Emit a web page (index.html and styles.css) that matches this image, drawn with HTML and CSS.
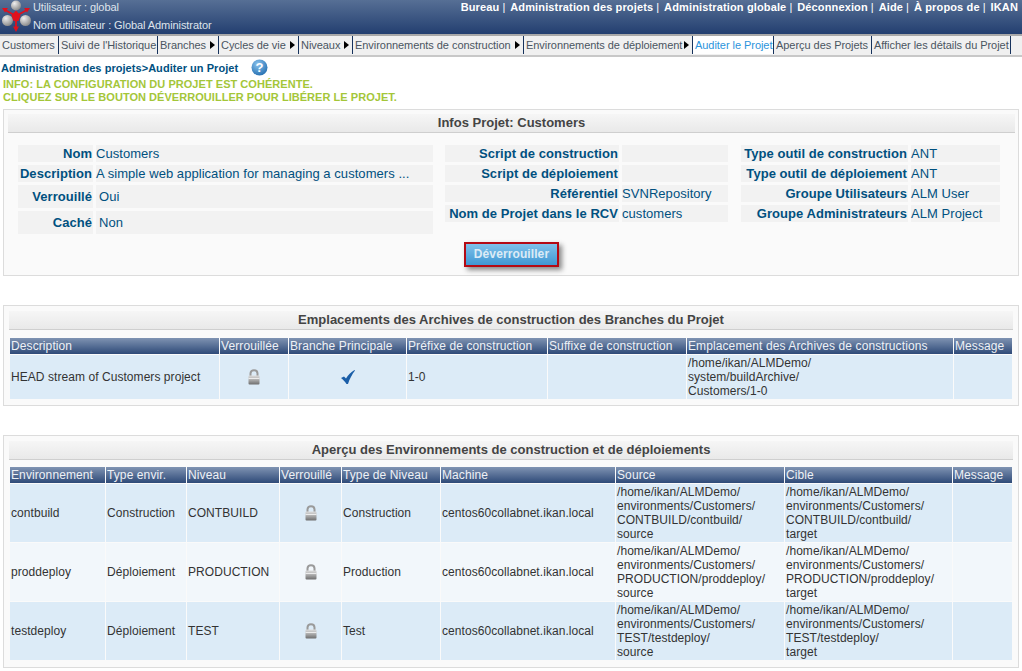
FILE: index.html
```html
<!DOCTYPE html>
<html lang="fr">
<head>
    <meta charset="UTF-8">
    <title>Auditer un Projet</title>
    <link rel="stylesheet" href="styles.css">
</head>
<body>
    <svg width="0" height="0" class="defs">
        <defs>
            <linearGradient id="lock-body" x1="0" y1="0" x2="0" y2="1">
                <stop offset="0" stop-color="#dcdcdc"/>
                <stop offset="0.45" stop-color="#b0b0b0"/>
                <stop offset="1" stop-color="#6e6e6e"/>
            </linearGradient>
            <symbol id="lock" viewBox="0 0 14 16">
                <path d="M3.500 7.500V4.500C3.500 2.500 5 1.200 7 1.200S10.500 2.500 10.500 4.500V7.500" fill="none" stroke="#9a9a9a" stroke-width="2"/>
                <rect x="1.500" y="6.500" width="11" height="9" rx="1" fill="url(#lock-body)"/>
                <rect x="1.500" y="9" width="11" height="1" fill="#ececec"/>
            </symbol>
            <radialGradient id="ball" cx="0.35" cy="0.3" r="0.8">
                <stop offset="0" stop-color="#eeeeee"/>
                <stop offset="1" stop-color="#808080"/>
            </radialGradient>
        </defs>
    </svg>

    <div class="header">
        <div class="user-box">
            <svg class="logo" width="30" height="33" viewBox="0 0 30 33">
                <circle cx="15" cy="5.500" r="5" fill="url(#ball)"/>
                <circle cx="6.500" cy="20.500" r="5.500" fill="url(#ball)"/>
                <circle cx="24.500" cy="20.500" r="5.500" fill="url(#ball)"/>
                <path d="M15 16L5 10.500M15 16L25 10.500M15 16V27" stroke="#e0101c" stroke-width="1.800"/>
                <path d="M15 10.500L19.500 15.500L17.500 21H12.500L10.500 15.500Z" fill="#e0101c"/>
                <path d="M1 8L7 8L4 12.500ZM29 8L23 8L26 12.500ZM15 32L12 26.500H18Z" fill="#e0101c"/>
            </svg>
            <div class="user-text">
                <div>Utilisateur : global</div>
                <div>Nom utilisateur : Global Administrator</div>
            </div>
        </div>
        <div class="top-links">
            <a>Bureau</a><span>|</span>
            <a>Administration des projets</a><span>|</span>
            <a>Administration globale</a><span>|</span>
            <a>Déconnexion</a><span>|</span>
            <a>Aide</a><span>|</span>
            <a>À propos de</a><span>|</span>
            <a>IKAN</a>
        </div>
    </div>

    <div class="nav">
        <a class="w-customers">Customers</a>
        <a class="w-suivi">Suivi de l'Historique</a>
        <a class="w-branches arrow">Branches</a>
        <a class="w-cycles arrow">Cycles de vie</a>
        <a class="w-niveaux arrow">Niveaux</a>
        <a class="w-envc arrow">Environnements de construction</a>
        <a class="w-envd arrow">Environnements de déploiement</a>
        <a class="w-audit active">Auditer le Projet</a>
        <a class="w-apercu">Aperçu des Projets</a>
        <a class="w-details">Afficher les détails du Projet</a>
    </div>

    <div class="crumb">
        <span>Administration des projets&gt;Auditer un Projet</span>
        <svg width="17" height="17" viewBox="0 0 17 17">
            <defs>
                <radialGradient id="help" cx="0.4" cy="0.3" r="0.8">
                    <stop offset="0" stop-color="#8cc4ee"/>
                    <stop offset="1" stop-color="#1c68ac"/>
                </radialGradient>
            </defs>
            <circle cx="8.500" cy="8.500" r="8" fill="url(#help)"/>
            <text x="8.500" y="13" class="help-mark">?</text>
        </svg>
    </div>
    <div class="info">
        INFO: LA CONFIGURATION DU PROJET EST COHÉRENTE.<br>
        CLIQUEZ SUR LE BOUTON DÉVERROUILLER POUR LIBÉRER LE PROJET.
    </div>

    <div class="panel panel-info">
        <h2 class="panel-title">Infos Projet: Customers</h2>
        <div class="fields">
            <div class="field-col col-a">
                <div class="field"><b>Nom</b><span>Customers</span></div>
                <div class="field"><b>Description</b><span>A simple web application for managing a customers ...</span></div>
                <div class="field tall"><b>Verrouillé</b><span>Oui</span></div>
                <div class="field tall"><b>Caché</b><span>Non</span></div>
            </div>
            <div class="field-col col-b">
                <div class="field"><b>Script de construction</b><span></span></div>
                <div class="field"><b>Script de déploiement</b><span></span></div>
                <div class="field"><b>Référentiel</b><span>SVNRepository</span></div>
                <div class="field"><b>Nom de Projet dans le RCV</b><span>customers</span></div>
            </div>
            <div class="field-col col-c">
                <div class="field"><b>Type outil de construction</b><span>ANT</span></div>
                <div class="field"><b>Type outil de déploiement</b><span>ANT</span></div>
                <div class="field"><b>Groupe Utilisateurs</b><span>ALM User</span></div>
                <div class="field"><b>Groupe Administrateurs</b><span>ALM Project</span></div>
            </div>
        </div>
        <div class="actions"><button class="btn">Déverrouiller</button></div>
    </div>

    <div class="panel panel-branches">
        <h2 class="panel-title">Emplacements des Archives de construction des Branches du Projet</h2>
        <table class="grid">
            <colgroup>
                <col class="b1"><col class="b2"><col class="b3"><col class="b4"><col class="b5"><col class="b6"><col class="b7">
            </colgroup>
            <tr>
                <th>Description</th><th>Verrouillée</th><th>Branche Principale</th><th>Préfixe de construction</th><th>Suffixe de construction</th><th>Emplacement des Archives de constructions</th><th>Message</th>
            </tr>
            <tr>
                <td>HEAD stream of Customers project</td>
                <td class="icon"><svg class="lock"><use href="#lock"/></svg></td>
                <td class="icon">
                    <svg width="16" height="16" viewBox="0 0 16 16"><path d="M1 9L4 7.500L6 9.500C8 6 11 3 14.500 1L15 1.500C12 5.500 9.500 10 8 15H6.500C5 12.500 3 10.500 1 9Z" fill="#1a5ea8"/></svg>
                </td>
                <td>1-0</td>
                <td></td>
                <td>/home/ikan/ALMDemo/<br>system/buildArchive/<br>Customers/1-0</td>
                <td></td>
            </tr>
        </table>
    </div>

    <div class="panel panel-envs">
        <h2 class="panel-title">Aperçu des Environnements de construction et de déploiements</h2>
        <table class="grid">
            <colgroup>
                <col class="e1"><col class="e2"><col class="e3"><col class="e4"><col class="e5"><col class="e6"><col class="e7"><col class="e8"><col class="e9">
            </colgroup>
            <tr>
                <th>Environnement</th><th>Type envir.</th><th>Niveau</th><th>Verrouillé</th><th>Type de Niveau</th><th>Machine</th><th>Source</th><th>Cible</th><th>Message</th>
            </tr>
            <tr>
                <td>contbuild</td><td>Construction</td><td>CONTBUILD</td>
                <td class="icon"><svg class="lock"><use href="#lock"/></svg></td>
                <td>Construction</td><td>centos60collabnet.ikan.local</td>
                <td>/home/ikan/ALMDemo/<br>environments/Customers/<br>CONTBUILD/contbuild/<br>source</td>
                <td>/home/ikan/ALMDemo/<br>environments/Customers/<br>CONTBUILD/contbuild/<br>target</td>
                <td></td>
            </tr>
            <tr class="alt">
                <td>proddeploy</td><td>Déploiement</td><td>PRODUCTION</td>
                <td class="icon"><svg class="lock"><use href="#lock"/></svg></td>
                <td>Production</td><td>centos60collabnet.ikan.local</td>
                <td>/home/ikan/ALMDemo/<br>environments/Customers/<br>PRODUCTION/proddeploy/<br>source</td>
                <td>/home/ikan/ALMDemo/<br>environments/Customers/<br>PRODUCTION/proddeploy/<br>target</td>
                <td></td>
            </tr>
            <tr>
                <td>testdeploy</td><td>Déploiement</td><td>TEST</td>
                <td class="icon"><svg class="lock"><use href="#lock"/></svg></td>
                <td>Test</td><td>centos60collabnet.ikan.local</td>
                <td>/home/ikan/ALMDemo/<br>environments/Customers/<br>TEST/testdeploy/<br>source</td>
                <td>/home/ikan/ALMDemo/<br>environments/Customers/<br>TEST/testdeploy/<br>target</td>
                <td></td>
            </tr>
        </table>
    </div>
</body>
</html>
```

FILE: styles.css
```css
html, body {
    margin: 0;
    padding: 0;
    overflow: hidden;
}
body {
    font-family: "Liberation Sans", Arial, sans-serif;
    font-size: 12px;
    color: #333;
    background: #fff;
}
.defs {
    display: block;
    height: 0;
}

/* header */
.header {
    display: flex;
    justify-content: space-between;
    height: 34px;
    background: linear-gradient(#566f95, #233f70);
    border-bottom: 2px solid #a9a9a9;
    color: #fff;
    box-sizing: content-box;
}
.user-box {
    display: flex;
}
.logo {
    margin-left: 1px;
    flex: none;
}
.user-text {
    margin: -2px 0 0 2px;
    font-size: 11px;
    letter-spacing: -0.08px;
    line-height: 18px;
    color: #dfe4ec;
}
.top-links {
    display: flex;
    padding-right: 4px;
    font-size: 11px;
    line-height: 15px;
}
.top-links a {
    font-weight: bold;
    letter-spacing: 0.14px;
}
.top-links span {
    margin: 0 5px 0 3px;
}

/* nav */
.nav {
    display: flex;
    height: 19px;
    background: #f0f0f0;
    border-bottom: 2px solid #c8c8c8;
    font-size: 11px;
    line-height: 19px;
    letter-spacing: -0.05px;
    color: #4a5561;
}
.nav a {
    box-sizing: border-box;
    height: 18px;
    padding-left: 2px;
    border-right: 1px solid #16325c;
    white-space: nowrap;
    position: relative;
}
.nav a.active {
    background: #fff;
    color: #2b94dc;
}
.nav a.arrow::after {
    content: "";
    position: absolute;
    right: 3px;
    top: 5px;
    border-left: 5px solid #000;
    border-top: 4px solid transparent;
    border-bottom: 4px solid transparent;
}
.w-customers { width: 59px; }
.w-suivi { width: 99px; }
.w-branches { width: 61px; }
.w-cycles { width: 80px; }
.w-niveaux { width: 54px; }
.w-envc { width: 171px; }
.w-envd { width: 169px; }
.w-audit { width: 81px; }
.w-apercu { width: 98px; }
.w-details { width: 139px; }

/* title and message */
.crumb {
    display: flex;
    align-items: center;
    height: 17px;
    margin: 2px 0 0 1px;
    font-size: 11px;
    font-weight: bold;
    letter-spacing: 0.05px;
    color: #00507f;
}
.crumb svg {
    margin-left: 13px;
}
.help-mark {
    font-family: "Liberation Sans", sans-serif;
    font-size: 13px;
    font-weight: bold;
    fill: #fff;
    text-anchor: middle;
}
.info {
    margin: 2px 0 0 3px;
    font-size: 11px;
    font-weight: bold;
    letter-spacing: 0.04px;
    line-height: 13px;
    color: #a4c639;
}

/* panels */
.panel {
    box-sizing: border-box;
    margin: 0 3px;
    background: #fafafa;
    border: 1px solid #dcdcdc;
}
.panel-title {
    margin: 0;
    height: 18px;
    font-size: 13px;
    line-height: 18px;
    font-weight: bold;
    text-align: center;
    color: #444;
    background: linear-gradient(#f6f6f6, #e9e9e9);
    border-bottom: 1px solid #cfcfcf;
}
.panel-info {
    height: 167px;
    margin-top: 5px;
    padding: 4px 3px 0 4px;
}
.panel-branches {
    height: 101px;
    margin-top: 29px;
    padding: 5px 5px 0 5px;
}
.panel-envs {
    height: 233px;
    margin-top: 29px;
    padding: 5px 5px 0 5px;
}
.panel-branches .grid {
    margin-top: 7px;
}

/* info fields */
.fields {
    display: flex;
    margin: 12px 0 0 10px;
    font-size: 13px;
    letter-spacing: 0.05px;
    color: #00507f;
}
.field-col {
    display: flex;
    flex-direction: column;
    gap: 3px;
}
.col-a { width: 415px; }
.col-b { width: 283px; margin-left: 12px; }
.col-c { width: 259px; margin-left: 13px; }
.field {
    display: grid;
    gap: 3px;
    height: 17px;
    line-height: 17px;
}
.col-a .field { grid-template-columns: 75px 1fr; }
.col-b .field { grid-template-columns: 174px 1fr; }
.col-c .field { grid-template-columns: 167px 1fr; }
.field b, .field span {
    background: #f2f2f2;
    white-space: nowrap;
}
.field b {
    padding-right: 1px;
    text-align: right;
}
.field.tall {
    height: 23px;
    line-height: 23px;
}
.field.tall span {
    padding-left: 3px;
}

/* button */
.actions {
    display: flex;
    justify-content: center;
    margin-top: 8px;
}
.btn {
    width: 95px;
    height: 25px;
    padding: 0 0 2px;
    border: 2px solid #b40a14;
    background: linear-gradient(#7fc1ea, #3f97d3);
    color: #dcebf6;
    font-family: "Liberation Sans", sans-serif;
    font-size: 12px;
    font-weight: bold;
    letter-spacing: 0.1px;
    box-shadow: 3px 3px 5px #888;
}

/* tables */
.grid {
    width: 1004px;
    margin-top: 6px;
    table-layout: fixed;
    border-collapse: separate;
    border-spacing: 1px;
    font-size: 12px;
}
.grid th {
    height: 16px;
    padding: 0 1px;
    font-weight: normal;
    font-size: 12px;
    letter-spacing: 0.1px;
    text-align: left;
    white-space: nowrap;
    overflow: hidden;
    color: #eef1f6;
    background: linear-gradient(#7f93b2, #2e4a78);
}
.grid td {
    padding: 1px;
    line-height: 14px;
    letter-spacing: 0.06px;
    background: #dcebf7;
    white-space: nowrap;
    color: #333;
}
.grid tr.alt td {
    background: #f2f7fb;
}
.grid td.icon {
    text-align: center;
}
.grid td svg {
    vertical-align: middle;
}
.lock {
    width: 14px;
    height: 16px;
}
.b1 { width: 209px; }
.b2 { width: 68px; }
.b3 { width: 117px; }
.b4 { width: 140px; }
.b5 { width: 138px; }
.b6 { width: 266px; }
.b7 { width: 58px; }
.e1 { width: 95px; }
.e2 { width: 80px; }
.e3 { width: 92px; }
.e4 { width: 61px; }
.e5 { width: 98px; }
.e6 { width: 174px; }
.e7 { width: 168px; }
.e8 { width: 167px; }
.e9 { width: 59px; }
```
